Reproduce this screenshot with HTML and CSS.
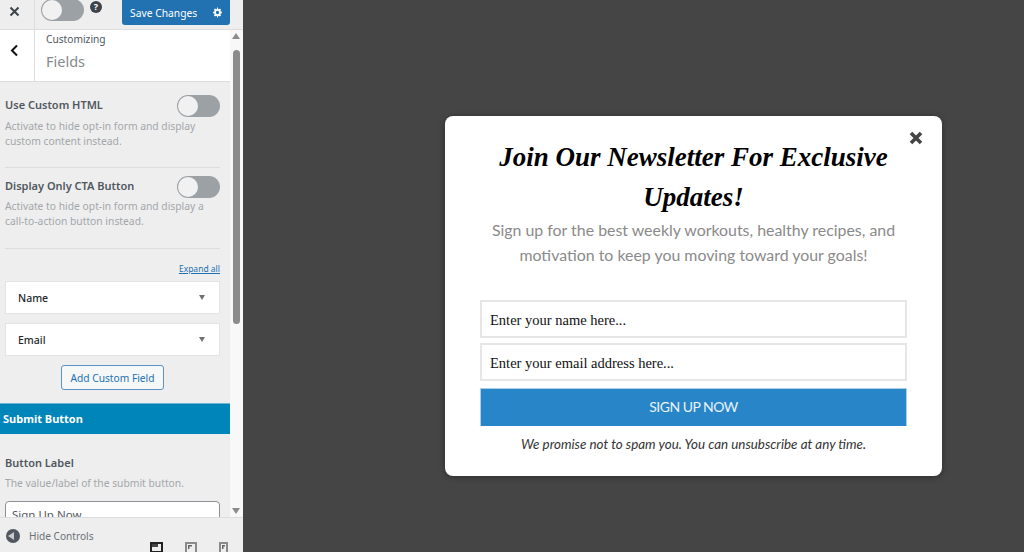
FILE: index.html
```html
<!DOCTYPE html>
<html lang="en">
<head>
<meta charset="utf-8">
<title>Fields</title>
<link rel="stylesheet" href="styles.css">
</head>
<body>
<div class="page">
  <aside class="sidebar">
    <header class="topbar">
      <div class="close-cell"><svg width="11" height="11" viewBox="0 0 11 11"><path d="M1.5 1.500l8 8M9.500 1.500l-8 8" stroke="#3c434a" stroke-width="2" fill="none"/></svg></div>
      <div class="top-tools">
        <span class="toggle toggle-top"><span class="knob"></span></span>
        <span class="help">?</span>
        <button class="save"><span>Save Changes</span><svg width="11" height="11" viewBox="0 0 20 20"><path fill="#fff" d="M18 11.400V8.600l-2.300-.5a6 6 0 0 0-.5-1.300l1.300-2-2-2-2 1.300a6 6 0 0 0-1.300-.5L10.700 1H9.300l-.5 2.600a6 6 0 0 0-1.300.5l-2-1.300-2 2 1.300 2a6 6 0 0 0-.5 1.300L2 8.600v2.800l2.300.5c.1.5.3.9.5 1.300l-1.300 2 2 2 2-1.300c.4.2.8.4 1.300.5l.5 2.600h1.400l.5-2.600c.5-.1.9-.3 1.300-.5l2 1.300 2-2-1.300-2c.2-.4.4-.8.5-1.300zM10 13a3 3 0 1 1 0-6 3 3 0 0 1 0 6z"/></svg></button>
      </div>
    </header>
    <div class="scroller">
      <div class="content">
        <section class="title-row">
          <div class="back"><svg width="9" height="13" viewBox="0 0 9 13"><path d="M7 1.500L2 6.500l5 5" stroke="#111" stroke-width="2" fill="none"/></svg></div>
          <div class="title-text"><div class="crumb">Customizing</div><div class="title">Fields</div></div>
        </section>
        <section class="setting first">
          <div class="setting-head"><strong>Use Custom HTML</strong><span class="toggle"><span class="knob"></span></span></div>
          <p>Activate to hide opt-in form and display custom content instead.</p>
        </section>
        <section class="setting second">
          <div class="setting-head"><strong>Display Only CTA Button</strong><span class="toggle"><span class="knob"></span></span></div>
          <p>Activate to hide opt-in form and display a call-to-action button instead.</p>
        </section>
        <div class="expand-row"><a class="expand">Expand all</a></div>
        <div class="field-row"><span>Name</span><i class="caret"></i></div>
        <div class="field-row"><span>Email</span><i class="caret"></i></div>
        <div class="add-row"><button class="add">Add Custom Field</button></div>
        <div class="band">Submit Button</div>
        <section class="label-block">
          <strong>Button Label</strong>
          <p>The value/label of the submit button.</p>
          <div class="text-input">Sign Up Now</div>
        </section>
      </div>
      <div class="scrollbar">
        <i class="arrow up"></i>
        <div class="thumb"></div>
        <i class="arrow down"></i>
      </div>
    </div>
    <footer class="foot">
      <span class="hide-icon"><i></i></span><span class="hide-text">Hide Controls</span>
      <div class="devices">
        <svg width="13" height="12" viewBox="0 0 13 12"><path d="M0 0h13v12H0z" fill="#222"/><path d="M2 2h9v7H2z" fill="#eee"/><path d="M2 2h6v3H2z" fill="#444"/></svg>
        <svg width="12" height="12" viewBox="0 0 12 12"><path d="M0 0h12v12H0z" fill="#8a8a8a"/><path d="M2 2h8v10H2z" fill="#eee"/><path d="M3 3h4v1.500H4.500V7H3z" fill="#666"/></svg>
        <svg width="9" height="12" viewBox="0 0 9 12"><path d="M0 0h9v12H0z" fill="#8a8a8a"/><path d="M2 2h5v10H2z" fill="#eee"/><path d="M3 3h3v1.500H4.500V7H3z" fill="#666"/></svg>
      </div>
    </footer>
  </aside>
  <main class="preview">
    <div class="modal">
      <svg class="modal-close" width="14" height="14" viewBox="0 0 14 14"><path d="M2 2l10 10M12 2L2 12" stroke="#444" stroke-width="3.600" fill="none"/></svg>
      <h1>Join Our Newsletter For Exclusive Updates!</h1>
      <p class="lead">Sign up for the best weekly workouts, healthy recipes, and motivation to keep you moving toward your goals!</p>
      <div class="input">Enter your name here...</div>
      <div class="input">Enter your email address here...</div>
      <div class="submit">SIGN UP NOW</div>
      <p class="note">We promise not to spam you. You can unsubscribe at any time.</p>
    </div>
  </main>
</div>
</body>
</html>
```
FILE: styles.css
```css
* { box-sizing: border-box; }
html, body { margin: 0; height: 100%; overflow: hidden; }
body { font-family: "Noto Sans", sans-serif; color: #50575e; }
.page { display: flex; width: 1024px; height: 552px; overflow: hidden; }

.sidebar { width: 243px; height: 552px; flex: none; display: flex; flex-direction: column; background: #eee; overflow: hidden; box-shadow: 1px 0 1px rgba(0,0,0,.3); }
.topbar { height: 30px; flex: none; display: flex; background: #eee; border-bottom: 1px solid #ddd; overflow: hidden; }
.close-cell { width: 35px; flex: none; display: flex; align-items: center; justify-content: center; padding: 0 6px 7px 0; border-right: 1px solid #ddd; }
.top-tools { flex: 1; display: flex; align-items: flex-start; padding-left: 6px; }
.toggle { width: 43px; height: 22px; border-radius: 11px; background: #9ca1a6; display: block; padding: 1px; flex: none; }
.knob { display: block; width: 20px; height: 20px; border-radius: 50%; background: #f1f1f1; }
.toggle-top { margin-top: -1px; }
.help { width: 12px; height: 12px; margin: 1px 0 0 6px; border-radius: 50%; background: #3c434a; color: #fff; font: 700 9px/12px "Noto Sans", sans-serif; text-align: center; flex: none; }
.save { width: 108px; height: 25px; margin-left: 20px; border: 0; border-radius: 0 0 3px 3px; background: #2271b1; color: #fff; font: 10.300px "Noto Sans", sans-serif; display: flex; align-items: center; justify-content: space-between; padding: 0 7px 0 8px; }

.scroller { flex: 1; min-height: 0; display: flex; overflow: hidden; }
.content { width: 230px; flex: none; overflow: hidden; }
.title-row { height: 52px; display: flex; background: #fff; border-bottom: 1px solid #ddd; }
.back { width: 35px; flex: none; display: flex; align-items: center; justify-content: center; padding: 0 6px 10px 0; border-right: 1px solid #ddd; }
.title-text { padding: 2px 0 0 11px; }
.crumb { font-size: 10.200px; line-height: 14px; color: #50575e; }
.title { font-size: 14.500px; line-height: 20px; margin-top: 5px; color: #84898e; }

.setting { margin: 0 10px 0 5px; border-bottom: 1px solid #ddd; }
.setting.first { padding: 13px 0 18px; }
.setting.second { padding: 8px 0 19px; }
.setting-head { display: flex; justify-content: space-between; align-items: center; height: 22px; }
.setting-head strong { font-size: 11px; line-height: 16px; font-weight: 600; color: #50575e; margin-bottom: 3px; }
.setting p, .label-block p { font-size: 10.300px; line-height: 15px; color: #a3a7ab; }
.setting.first p { margin: 2px 0 0; }
.setting.second p { margin: 1px 0 0; }

.expand-row { margin: 13px 10px 6px 5px; text-align: right; font-size: 8.500px; line-height: 13px; }
.expand { color: #2271b1; text-decoration: underline; }
.field-row { margin: 0 10px 9px 5px; height: 33px; background: #fff; border: 1px solid #e4e4e4; display: flex; align-items: center; justify-content: space-between; padding: 0 14px 0 12px; font-size: 10.500px; font-weight: 500; color: #23282d; }
.caret { width: 0; height: 0; border-left: 3.500px solid transparent; border-right: 3.500px solid transparent; border-top: 5px solid #6e7276; }
.add-row { text-align: center; height: 38px; padding-right: 5px; }
.add { width: 103px; height: 25px; margin: 0; padding: 0; border: 1px solid #5a94c5; border-radius: 3px; background: #f6f7f7; color: #2271b1; font: 10.200px "Noto Sans", sans-serif; display: inline-block; vertical-align: top; }
.band { height: 31px; background: #0085ba; border-top: 1px solid #6fb4d2; color: #fff; font-size: 11px; font-weight: 700; line-height: 29px; padding-left: 3px; }
.label-block { padding: 21px 10px 0 5px; }
.label-block strong { display: block; font-size: 11px; line-height: 16px; font-weight: 600; color: #50575e; }
.label-block p { margin: 5px 0 0; }
.text-input { margin-top: 10px; height: 30px; background: #fff; border: 1px solid #8c8f94; border-radius: 4px; font-size: 11.500px; line-height: 25px; padding-left: 6px; color: #50575e; }

.scrollbar { width: 13px; flex: none; background: #f8f8f8; position: relative; }
.thumb { position: absolute; top: 20px; left: 3px; width: 7px; height: 274px; border-radius: 4px; background: #8c8c8c; }
.arrow { position: absolute; left: 2px; width: 0; height: 0; border-left: 4.500px solid transparent; border-right: 4.500px solid transparent; }
.arrow.up { top: 3px; border-bottom: 6px solid #8c8c8c; }
.arrow.down { bottom: 3px; border-top: 6px solid #8c8c8c; }

.foot { height: 35px; flex: none; display: flex; align-items: flex-start; background: #eee; border-top: 1px solid #ddd; padding: 11px 0 0 6px; position: relative; overflow: hidden; }
.hide-icon { width: 14px; height: 14px; border-radius: 50%; background: #50575e; display: flex; align-items: center; padding-left: 2px; flex: none; }
.hide-icon i { width: 0; height: 0; border-top: 4px solid transparent; border-bottom: 4px solid transparent; border-right: 6px solid #c8cacc; }
.hide-text { margin-left: 9px; font-size: 10.100px; line-height: 14px; color: #6b7075; }
.devices { position: absolute; left: 150px; top: 24px; display: flex; align-items: flex-start; gap: 22px; }
.devices svg { display: block; }

.preview { flex: 1; background: #454545; padding: 116px 0 0 202px; min-width: 0; }
.modal { width: 497px; height: 360px; background: #fff; border-radius: 8px; position: relative; padding: 22px 35px 0; text-align: center; box-shadow: 0 1px 6px rgba(0,0,0,.35); }
.modal-close { position: absolute; top: 15px; right: 19px; }
h1 { margin: 0 auto; width: 420px; font: italic 700 27px/39.500px "Liberation Serif", serif; color: #000; }
.lead { margin: 0 -5px 33px; font-size: 15.900px; line-height: 25px; color: #8a8a8a; font-family: "Lato", sans-serif; }
.input { height: 38px; margin-bottom: 5px; border: 2px solid #e6e6e6; background: #fff; text-align: left; padding-left: 8px; font: 14.500px/36px "Liberation Serif", serif; color: #111; }
.submit { height: 38px; margin-top: 7px; background: #2885c8; border: 1px solid #a9cfea; border-width: 1px 1px 0; color: #e9f3fa; font: 14px/36px "Lato", sans-serif; letter-spacing: -.5px; }
.note { margin: 10px -5px 0; font: italic 13.400px/17px "Lato", sans-serif; color: #333; }
```
